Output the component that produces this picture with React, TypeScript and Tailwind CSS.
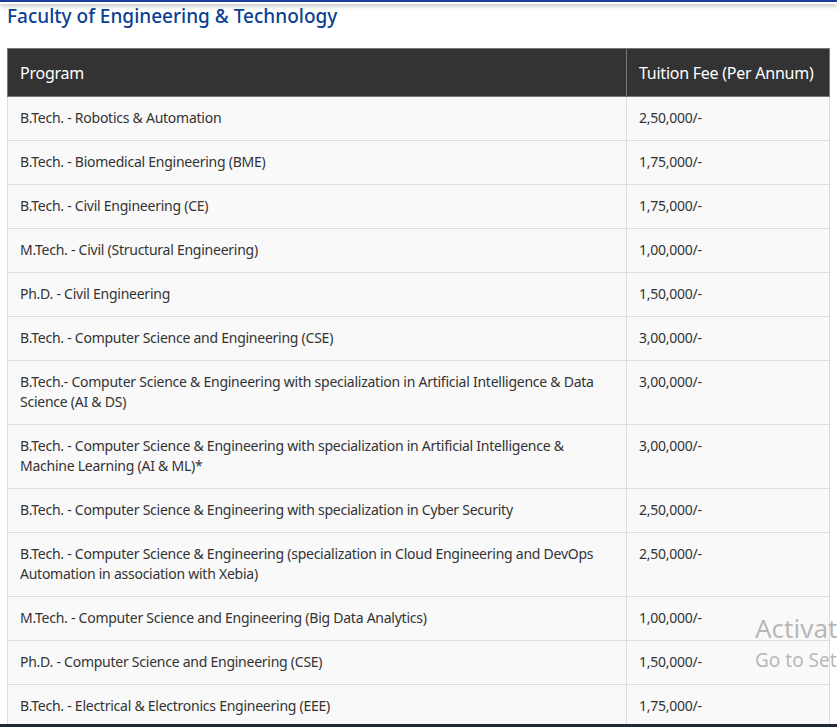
const rows: [string, string][] = [
  ["B.Tech. - Robotics & Automation", "2,50,000/-"],
  ["B.Tech. - Biomedical Engineering (BME)", "1,75,000/-"],
  ["B.Tech. - Civil Engineering (CE)", "1,75,000/-"],
  ["M.Tech. - Civil (Structural Engineering)", "1,00,000/-"],
  ["Ph.D. - Civil Engineering", "1,50,000/-"],
  ["B.Tech. - Computer Science and Engineering (CSE)", "3,00,000/-"],
  ["B.Tech.- Computer Science & Engineering with specialization in Artificial Intelligence & Data Science (AI & DS)", "3,00,000/-"],
  ["B.Tech. - Computer Science & Engineering with specialization in Artificial Intelligence & Machine Learning (AI & ML)*", "3,00,000/-"],
  ["B.Tech. - Computer Science & Engineering with specialization in Cyber Security", "2,50,000/-"],
  ["B.Tech. - Computer Science & Engineering (specialization in Cloud Engineering and DevOps Automation in association with Xebia)", "2,50,000/-"],
  ["M.Tech. - Computer Science and Engineering (Big Data Analytics)", "1,00,000/-"],
  ["Ph.D. - Computer Science and Engineering (CSE)", "1,50,000/-"],
  ["B.Tech. - Electrical & Electronics Engineering (EEE)", "1,75,000/-"],
  ["M.Tech. - Electrical Engineering", "1,00,000/-"],
];

export default function App() {
  return (
    <div className="relative h-[727px] w-[837px] overflow-hidden bg-white font-['Open_Sans',sans-serif] text-[#333]">
      <div className="h-[4px] border-t-2 border-[#1a3d9e] shadow-[0_2px_4px_rgba(0,0,0,0.25)]" />
      <h2 className="ml-[7px] font-['Roboto',sans-serif] text-[19px] font-medium leading-[24px] text-[#0c3f93]">
        Faculty of Engineering &amp; Technology
      </h2>
      <table className="ml-[7px] mt-[20px] w-[823px] border-collapse text-[14px] leading-[20px] tracking-[-0.25px]">
        <thead>
          <tr className="bg-[#333] text-[16px] text-white">
            <th className="h-[48px] w-[619px] border border-[#777] px-3 text-left font-normal">Program</th>
            <th className="whitespace-nowrap border border-[#777] px-3 text-left font-normal">Tuition Fee (Per Annum)</th>
          </tr>
        </thead>
        <tbody>
          {rows.map(([p, f], i) => (
            <tr key={i} className="bg-[#f9f9f9]">
              <td className="border border-[#ddd] px-3 pb-3 pt-[11px] align-top">{p}</td>
              <td className="border border-[#ddd] px-3 pb-3 pt-[11px] align-top">{f}</td>
            </tr>
          ))}
        </tbody>
      </table>
      <div className="pointer-events-none absolute left-[755px] top-[610px] whitespace-nowrap font-['Open_Sans',sans-serif] text-[#999]/70">
        <div className="text-[26px] leading-[36px]">Activate Windows</div>
        <div className="text-[19px] leading-[28px]">Go to Settings</div>
      </div>
      <div className="absolute bottom-0 left-0 h-[3px] w-full bg-[#1e2a38]" />
    </div>
  );
}
